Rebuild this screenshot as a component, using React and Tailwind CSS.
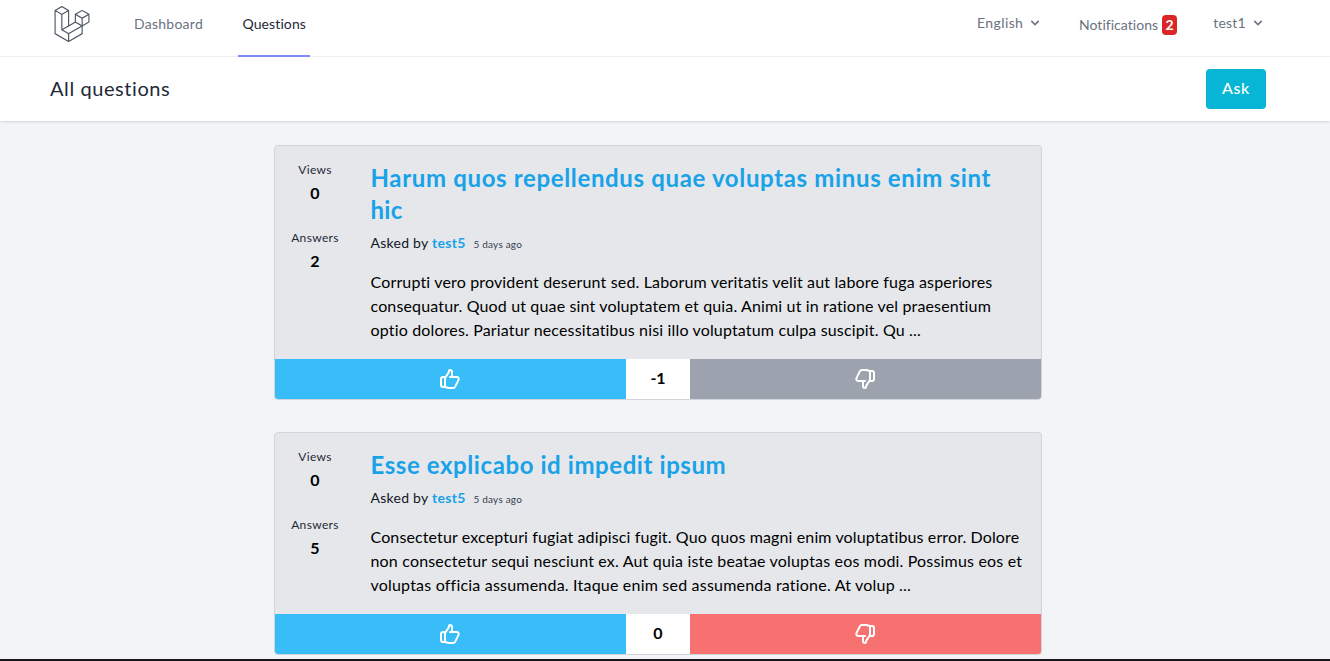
import { SiLaravel } from 'react-icons/si';

const questions = [
  {
    title: [
      { text: 'Harum quos repellendus quae voluptas minus enim sint', className: 'tracking-[0.65px]' },
      { text: 'hic', className: 'tracking-[0.3px]' },
    ],
    views: 0,
    answers: 2,
    author: 'test5',
    age: '5 days ago',
    body: [
      { text: 'Corrupti vero provident deserunt sed. Laborum veritatis velit aut labore fuga asperiores', className: 'tracking-[0.155px]' },
      { text: 'consequatur. Quod ut quae sint voluptatem et quia. Animi ut in ratione vel praesentium', className: 'tracking-[0.146px]' },
      { text: 'optio dolores. Pariatur necessitatibus nisi illo voluptatum culpa suscipit. Qu ...', className: 'tracking-[0.158px]' },
    ],
    score: -1,
    downClass: 'bg-[#9ca3af]',
  },
  {
    title: [{ text: 'Esse explicabo id impedit ipsum', className: 'tracking-[0.58px]' }],
    views: 0,
    answers: 5,
    author: 'test5',
    age: '5 days ago',
    body: [
      { text: 'Consectetur excepturi fugiat adipisci fugit. Quo quos magni enim voluptatibus error. Dolore', className: 'tracking-[0.124px]' },
      { text: 'non consectetur sequi nesciunt ex. Aut quia iste beatae voluptas eos modi. Possimus eos et', className: 'tracking-[0.175px]' },
      { text: 'voluptas officia assumenda. Itaque enim sed assumenda ratione. At volup ...', className: 'tracking-[0.203px]' },
    ],
    score: 0,
    downClass: 'bg-[#f87171]',
  },
];

function Chevron() {
  return (
    <svg className="ml-1 h-4 w-4 fill-current" viewBox="0 0 20 20">
      <path
        fillRule="evenodd"
        clipRule="evenodd"
        d="M5.293 7.293a1 1 0 011.414 0L10 10.586l3.293-3.293a1 1 0 111.414 1.414l-4 4a1 1 0 01-1.414 0l-4-4a1 1 0 010-1.414z"
      />
    </svg>
  );
}

function Thumb({ down }) {
  return (
    <svg
      className="h-6 w-6"
      viewBox="0 0 24 24"
      fill="none"
      stroke="currentColor"
      strokeWidth="2"
      strokeLinecap="round"
      strokeLinejoin="round"
    >
      <path
        d={
          down
            ? 'M10 14H5.236a2 2 0 01-1.789-2.894l3.5-7A2 2 0 018.736 3h4.018a2 2 0 01.485.06l3.76.94m-7 10v5a2 2 0 002 2h.096c.5 0 .905-.405.905-.904 0-.715.211-1.413.608-2.008L17 13V4m-7 10h2m5-10h2a2 2 0 012 2v6a2 2 0 01-2 2h-2.5'
            : 'M14 10h4.764a2 2 0 011.789 2.894l-3.5 7A2 2 0 0115.263 21h-4.017c-.163 0-.326-.02-.485-.06L7 20m7-10V5a2 2 0 00-2-2h-.095c-.5 0-.905.405-.905.905 0 .714-.211 1.412-.608 2.006L7 11v9m7-10h-2M7 20H5a2 2 0 01-2-2v-6a2 2 0 012-2h2.5'
        }
      />
    </svg>
  );
}

function Nav() {
  return (
    <nav className="border-b border-[#f3f4f6] bg-white">
      <div className="flex h-14 w-[1316px] justify-between pr-[50px] pl-[53.5px] text-sm text-[#6b7280]">
        <div className="flex">
          <a className="mt-1.5 block w-[75.5px]">
            <SiLaravel className="h-9 w-9 text-[#4b5563]" />
          </a>
          <a className="h-[57px] w-[77px] px-1 pt-[14px] pl-[5px] tracking-[0.255px]">Dashboard</a>
          <a className="ml-8 h-[57px] w-[72px] border-b-2 border-[#818cf8] pt-[14px] pl-[4.5px] tracking-[0.1px] text-[#1f2937]">
            Questions
          </a>
        </div>
        <div className="flex items-start">
          <button className="mt-[13px] flex items-center">
            <span className="w-[46px] tracking-[0.4px]">English</span>
            <Chevron />
          </button>
          <a className="mt-[15px] ml-9 flex items-center">
            <span className="-mt-px w-[83px] tracking-[0.03px]">Notifications</span>
            <span className="flex h-5 w-[15px] items-center justify-center rounded bg-[#dc2626] text-sm font-bold text-white">2</span>
          </a>
          <button className="mt-[13px] ml-9 flex items-center">
            <span className="w-[33px] tracking-[0.15px]">test1</span>
            <Chevron />
          </button>
        </div>
      </div>
    </nav>
  );
}

function Stat({ label, value }) {
  return (
    <div>
      <div className="text-xs leading-4 tracking-[0.35px] text-[#1f2937]">{label}</div>
      <div className="mt-[3px] mb-px leading-6 font-bold text-black">{value}</div>
    </div>
  );
}

function Question({ q }) {
  return (
    <article className="overflow-hidden rounded border border-[#d1d5db] bg-[#e5e7eb]">
      <div className="flex">
        <div className="flex w-20 shrink-0 flex-col gap-6 pt-4 text-center">
          <Stat label="Views" value={q.views} />
          <Stat label="Answers" value={q.answers} />
        </div>
        <div className="py-4 pl-[15.5px] whitespace-nowrap">
          <h2 className="text-2xl leading-8 font-bold text-[#18a2e8]">
            {q.title.map((line) => (
              <span key={line.text} className={`block ${line.className}`}>{line.text}</span>
            ))}
          </h2>
          <div className="mt-1 flex h-6 items-baseline text-sm leading-[26px] text-[#111827]">
            <span className="w-[61.5px] tracking-[0.256px]">Asked by</span>
            <a className="w-[41.5px] font-bold tracking-[0.29px] text-[#18a2e8]">{q.author}</a>
            <span className="text-[10px] tracking-[0.2px] text-[#374151]">{q.age}</span>
          </div>
          <p className="mt-4 mb-px leading-6 text-black">
            {q.body.map((line) => (
              <span key={line.text} className={`block ${line.className}`}>{line.text}</span>
            ))}
          </p>
        </div>
      </div>
      <div className="flex h-10 text-white">
        <button className="flex flex-1 items-center justify-center bg-[#38bdf8] pr-px">
          <Thumb />
        </button>
        <div className="flex w-16 items-center justify-center bg-white pb-0.5 font-bold text-black">{q.score}</div>
        <button className={`flex flex-1 items-center justify-center pr-px ${q.downClass}`}>
          <Thumb down />
        </button>
      </div>
    </article>
  );
}

export default function App() {
  return (
    <div className="flex h-[661px] flex-col overflow-hidden border-b-2 border-[#18181b] bg-[#f3f4f6] font-['Lato',sans-serif]">
      <Nav />
      <header className="bg-white shadow">
        <div className="flex h-16 w-[1316px] items-center justify-between px-[50px]">
          <h1 className="pb-0.5 text-xl leading-7 tracking-[0.58px] text-[#1f2937]">All questions</h1>
          <button className="h-10 w-[60px] rounded bg-[#06b6d4] pb-0.5 font-medium tracking-[0.6px] text-white">Ask</button>
        </div>
      </header>
      <main className="flex w-[1316px] flex-col items-center pt-6">
        <div className="flex w-3xl flex-col gap-8">
          {questions.map((q) => (
            <Question key={q.title[0].text} q={q} />
          ))}
        </div>
      </main>
    </div>
  );
}
